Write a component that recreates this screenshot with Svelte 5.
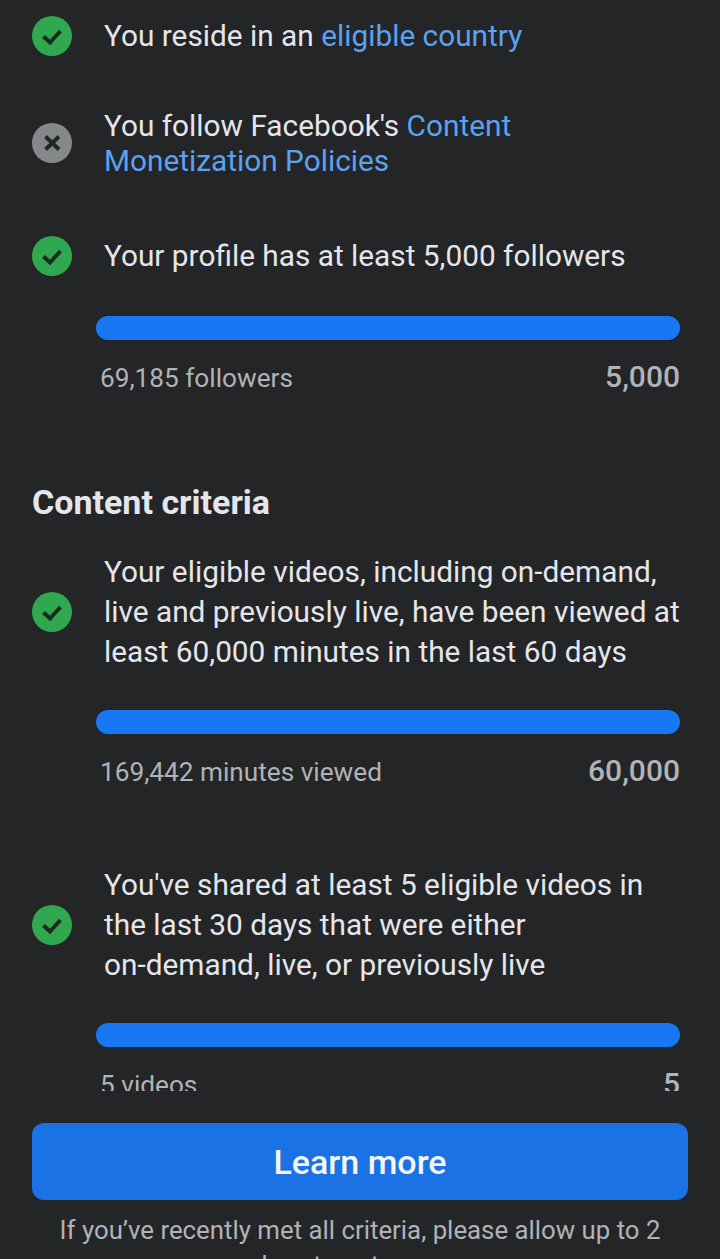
<script>
    const check = "M11.5 20.5 L18 26.5 L28.5 15";
    const cross = "M13.5 13.5 L27 26.5 M27 13.5 L13.5 26.5";
</script>

<div class="page">
    <div class="scroll">
        <div class="row first">
            <svg class="icon" viewBox="0 0 40 40"><circle cx="20" cy="20" r="20" fill="#2fa84f"/><path d={check} class="mark"/></svg>
            <div class="text">You reside in an <span class="link">eligible country</span></div>
        </div>
        <div class="row second">
            <svg class="icon" viewBox="0 0 40 40"><circle cx="20" cy="20" r="20" fill="#86878b"/><path d={cross} class="mark"/></svg>
            <div class="text tight">You follow Facebook's <span class="link">Content Monetization Policies</span></div>
        </div>
        <div class="row third">
            <svg class="icon" viewBox="0 0 40 40"><circle cx="20" cy="20" r="20" fill="#2fa84f"/><path d={check} class="mark"/></svg>
            <div class="text">Your profile has at least 5,000 followers</div>
        </div>
        <div class="progress">
            <div class="bar"></div>
            <div class="labels"><span class="label">69,185 followers</span><span class="value">5,000</span></div>
        </div>

        <h2>Content criteria</h2>

        <div class="row criteria">
            <svg class="icon" viewBox="0 0 40 40"><circle cx="20" cy="20" r="20" fill="#2fa84f"/><path d={check} class="mark"/></svg>
            <div class="text">Your eligible videos, including on-demand, live and previously live, have been viewed at least 60,000 minutes in the last 60 days</div>
        </div>
        <div class="progress">
            <div class="bar"></div>
            <div class="labels"><span class="label">169,442 minutes viewed</span><span class="value">60,000</span></div>
        </div>

        <div class="row criteria next">
            <svg class="icon" viewBox="0 0 40 40"><circle cx="20" cy="20" r="20" fill="#2fa84f"/><path d={check} class="mark"/></svg>
            <div class="text">You've shared at least 5 eligible videos in the last 30 days that were either<br/>on-demand, live, or previously live</div>
        </div>
        <div class="progress">
            <div class="bar"></div>
            <div class="labels"><span class="label">5 videos</span><span class="value">5</span></div>
        </div>
    </div>

    <div class="footer">
        <button class="learn">Learn more</button>
        <p class="note">If you’ve recently met all criteria, please allow up to 2 days to get access</p>
    </div>
</div>

<style>
    :global(body) {
        background-color: #242526;
    }

    .page {
        height: 1259px;
        overflow: hidden;
        background-color: #242526;
        font-family: Roboto, "Liberation Sans", sans-serif;
    }

    .scroll {
        height: 1091px;
        overflow: hidden;
        padding: 0 32px;
    }

    .row {
        display: flex;
        align-items: center;
        gap: 32px;
    }

    .first {
        padding-top: 16px;
    }

    .second {
        margin-top: 52px;
    }

    .third {
        margin-top: 58px;
    }

    .icon {
        width: 40px;
        height: 40px;
        flex-shrink: 0;
    }

    .mark {
        fill: none;
        stroke: #1c2b20;
        stroke-width: 4;
    }

    .text {
        font-size: 29.8px;
        line-height: 40px;
        color: #e4e6eb;
        width: 585px;
        flex-shrink: 0;
    }

    .tight {
        line-height: 35px;
    }

    .link {
        color: #5ba2f0;
    }

    .progress {
        margin-left: 64px;
        width: 584px;
        margin-top: 40px;
    }

    .criteria + .progress {
        margin-top: 38px;
    }

    .bar {
        height: 24px;
        border-radius: 12px;
        background-color: #1877f2;
    }

    .labels {
        display: flex;
        justify-content: space-between;
        align-items: baseline;
        padding-left: 4px;
        margin-top: 19px;
        height: 34px;
    }

    .label {
        font-size: 26.2px;
        color: #b0b3b8;
    }

    .value {
        font-size: 30px;
        font-weight: 500;
        color: #b0b3b8;
    }

    h2 {
        margin: 89px 0 0;
        font-size: 34px;
        line-height: 40px;
        font-weight: 700;
        color: #e4e6eb;
    }

    .criteria {
        margin-top: 30px;
    }

    .next {
        margin-top: 78px;
    }

    .footer {
        padding: 32px 32px 0;
        text-align: center;
    }

    .learn {
        display: block;
        width: 100%;
        height: 77px;
        border: none;
        border-radius: 12px;
        background-color: #1a72e4;
        color: #f5f6f7;
        font-family: inherit;
        font-size: 34px;
        font-weight: 500;
    }

    .note {
        margin: 13px 0 0;
        font-size: 25.8px;
        line-height: 35px;
        color: #b0b3b8;
    }
</style>
